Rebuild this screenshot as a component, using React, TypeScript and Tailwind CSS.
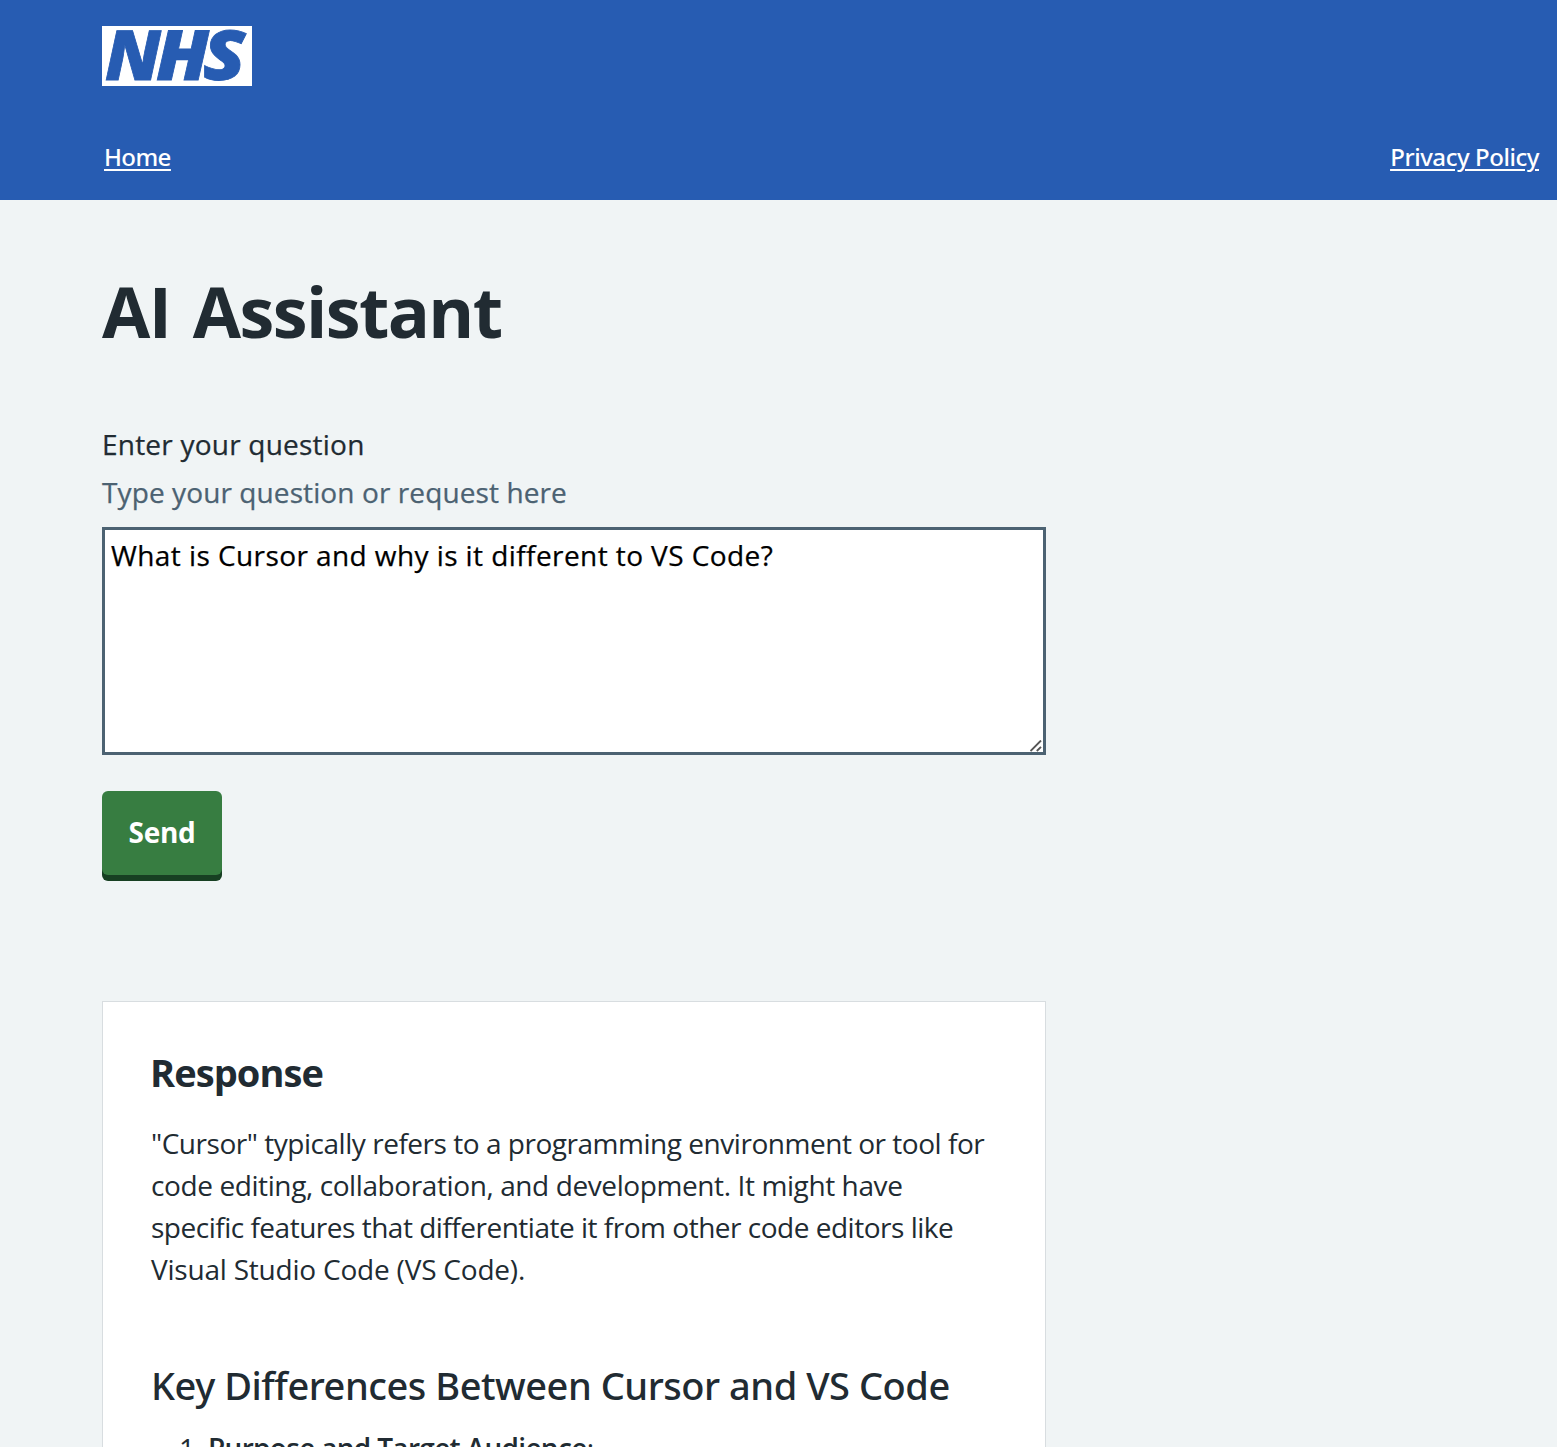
const responseLines = [
  { text: '"Cursor" typically refers to a programming environment or tool for', tracking: 'tracking-[-0.47px]' },
  { text: 'code editing, collaboration, and development. It might have', tracking: 'tracking-[-0.4px]' },
  { text: 'specific features that differentiate it from other code editors like', tracking: 'tracking-[-0.49px]' },
  { text: 'Visual Studio Code (VS Code).', tracking: 'tracking-[-0.21px]' },
];

function NhsLogo() {
  return (
    <svg width="150" height="60" viewBox="0 0 150 60" role="img" aria-label="NHS" className="block">
      <rect width="150" height="60" fill="#fff" />
      <g fill="#275cb2" stroke="#275cb2" strokeWidth="0.8" fontFamily="'Open Sans', 'Noto Sans', sans-serif" fontWeight="800" fontStyle="italic" fontSize="68.5">
        <text x="3" y="54" textLength="56" lengthAdjust="spacingAndGlyphs">N</text>
        <text x="54" y="54" textLength="53" lengthAdjust="spacingAndGlyphs">H</text>
        <text x="101" y="54" textLength="42.5" lengthAdjust="spacingAndGlyphs">S</text>
      </g>
    </svg>
  );
}

export default function App() {
  return (
    <div className="h-[1447px] overflow-hidden bg-[#f0f4f5] font-['Open_Sans','Noto_Sans',sans-serif] text-[#212b32]">
      <header className="flex h-[200px] flex-col bg-[#275cb2] pl-[102px] pt-[26px] text-white">
        <NhsLogo />
        <nav className="mt-[53px] flex items-center justify-between pl-[2px] pr-[18px] font-['Noto_Sans',sans-serif] text-2xl font-medium leading-9 underline decoration-2 underline-offset-[3px]">
          <a href="#" className="whitespace-nowrap tracking-[-0.6px]">Home</a>
          <a href="#" className="whitespace-nowrap tracking-[-0.45px]">Privacy Policy</a>
        </nav>
      </header>

      <main className="w-[1046px] pl-[102px]">
        <h1 className="whitespace-nowrap pt-[71px] text-[70px] font-bold leading-[80px] tracking-[-1.6px] [word-spacing:6px]">AI Assistant</h1>

        <form className="mt-[72px] flex flex-col items-start">
          <label htmlFor="question" className="whitespace-nowrap text-[28px] leading-[42px] tracking-[0.22px] [-webkit-text-stroke:0.25px_#212b32]">Enter your question</label>
          <span className="mt-[6px] whitespace-nowrap text-[28px] leading-[42px] tracking-[0.1px] text-[#4c6272] [-webkit-text-stroke:0.25px_#4c6272]">Type your question or request here</span>
          <div className="relative mt-[14px] w-full">
            <textarea
              id="question"
              spellCheck={false}
              defaultValue="What is Cursor and why is it different to VS Code?"
              className="block h-[228px] w-full resize-none border-[3px] border-[#4c6272] bg-white pb-[5px] pl-[6px] pr-[5px] pt-1 text-[28px] leading-[42px] tracking-[0.42px] text-black outline-none [-webkit-text-stroke:0.25px_#000]"
            />
            <svg width="12" height="12" viewBox="0 0 12 12" className="absolute bottom-[3px] right-[4px]" stroke="#555" strokeWidth="1.9" fill="none">
              <path d="M0.5 11L11 0.5M6.8 11L11 6.8" />
            </svg>
          </div>
          <button type="button" className="mt-9 h-[84px] w-[120px] rounded-[6px] bg-[#377d41] pb-[2px] text-[28px] font-bold leading-[42px] tracking-[-0.3px] text-white shadow-[0_6px_0_#173f22]">
            Send
          </button>
        </form>

        <section className="mt-[126px] h-[500px] border border-[#d8dde0] bg-white pl-12 pt-[43px]">
          <h2 className="-ml-px whitespace-nowrap text-[38px] font-bold leading-[54px] tracking-[-0.9px]">Response</h2>
          <div className="mt-[23px] text-[28px] leading-[42px]">
            {responseLines.map((line) => (
              <p key={line.text} className={`whitespace-nowrap ${line.tracking}`}>{line.text}</p>
            ))}
          </div>
          <h3 className="mt-[68px] whitespace-nowrap font-['Noto_Sans',sans-serif] text-[38px] font-medium leading-[54px] tracking-[-0.47px]">Key Differences Between Cursor and VS Code</h3>
          <ol className="mt-[15px] text-[28px] leading-[42px]">
            <li className="flex whitespace-nowrap pl-[28px]">
              <span className="w-[29px]">1.</span>
              <span className="tracking-[-0.68px]"><strong className="font-semibold">Purpose and Target Audience</strong>:</span>
            </li>
          </ol>
        </section>
      </main>
    </div>
  );
}
